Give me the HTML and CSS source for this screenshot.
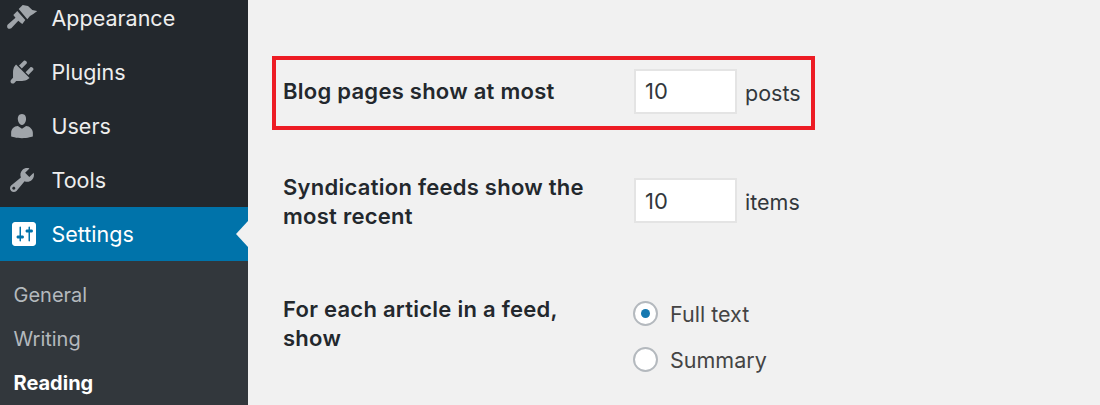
FILE: index.html
```html
<!DOCTYPE html>
<html lang="en">
<head>
<meta charset="utf-8">
<title>Reading Settings</title>
<link rel="stylesheet" href="styles.css">
</head>
<body>
<div class="page">
  <aside class="sidebar">
    <ul class="menu">
      <li class="item"><svg class="icon" viewBox="0 0 30 30"><path d="M11.700 6l4-4 5.300 1 4.300 4 5 1-4 3-3.300 2-2.700 3.300zM10.300 8l8 9-3 4-1.700-1.300-2.300-2-7 7.600c-1 .8-3 .5-3.800-.4-.6-.9-.5-2.800.3-3.500l7.700-6.600L6.300 12z"/></svg>Appearance</li>
      <li class="item"><svg class="icon" viewBox="0 0 20 20"><path d="M13.110 4.360L9.870 7.600 8 5.730l3.240-3.240c.35-.34 1.050-.2 1.560.32.52.51.66 1.210.31 1.550zm-8 1.770l.91-1.120 9.010 9.010-1.190.84c-.71.71-2.630 1.160-3.820 1.160H6.140L4.900 17.260c-.59.59-1.540.59-2.120 0-.59-.58-.59-1.530 0-2.120l1.240-1.240v-3.880c0-1.130.4-3.190 1.090-3.890zm7.260 3.970l3.240-3.240c.34-.35 1.040-.21 1.550.31.52.51.66 1.210.31 1.550l-3.240 3.250z"/></svg>Plugins</li>
      <li class="item"><svg class="icon" viewBox="0 0 20 20"><path d="M10 9.250c-2.270 0-2.730-3.440-2.730-3.440C7 4.020 7.820 2 9.970 2c2.160 0 2.980 2.020 2.710 3.810 0 0-.41 3.440-2.680 3.440zm0 2.570L12.720 10c2.390 0 4.520 2.330 4.520 4.530v2.490s-3.650 1.130-7.240 1.130c-3.650 0-7.240-1.130-7.240-1.130v-2.490c0-2.250 1.940-4.480 4.470-4.480z"/></svg>Users</li>
      <li class="item"><svg class="icon" viewBox="0 0 20 20"><path d="M16.680 9.770c-1.340 1.340-3.300 1.670-4.950.99l-5.410 6.520c-.99.99-2.590.99-3.580 0s-.99-2.590 0-3.570l6.520-5.420c-.68-1.650-.35-3.610.99-4.950 1.280-1.280 3.120-1.620 4.720-1.060l-2.890 2.890 2.820 2.820 2.860-2.870c.53 1.580.18 3.390-1.080 4.650zM3.810 16.210c.4.39 1.040.39 1.430 0 .4-.4.4-1.040 0-1.430-.39-.4-1.030-.4-1.430 0-.39.39-.39 1.030 0 1.430z"/></svg>Tools</li>
      <li class="item current"><svg class="icon" viewBox="2 2 16 16"><path fill-rule="evenodd" d="M18 16V4c0-1.100-.9-2-2-2H4c-1.100 0-2 .9-2 2v12c0 1.100.9 2 2 2h12c1.100 0 2-.9 2-2zM8 11h1c.55 0 1 .45 1 1s-.45 1-1 1H8v1.500c0 .28-.22.5-.5.5s-.5-.22-.5-.5V13H6c-.55 0-1-.45-1-1s.45-1 1-1h1V5.500c0-.28.22-.5.5-.5s.5.22.5.5V11zm5-2h-1c-.55 0-1-.45-1-1s.45-1 1-1h1V5.500c0-.28.22-.5.5-.5s.5.22.5.5V7h1c.55 0 1 .45 1 1s-.45 1-1 1h-1v5.500c0 .28-.22.5-.5.5s-.5-.22-.5-.5V9z"/></svg>Settings</li>
    </ul>
    <ul class="submenu">
      <li class="subitem">General</li>
      <li class="subitem">Writing</li>
      <li class="subitem active">Reading</li>
    </ul>
  </aside>
  <main class="content">
    <div class="row highlight">
      <div class="label">Blog pages show at most</div>
      <div class="field"><span class="input">10</span><span class="unit">posts</span></div>
    </div>
    <div class="row second">
      <div class="label">Syndication feeds show the most recent</div>
      <div class="field"><span class="input">10</span><span class="unit">items</span></div>
    </div>
    <div class="row third">
      <div class="label">For each article in a feed, show</div>
      <div class="choices">
        <div class="choice"><span class="radio checked"></span>Full text</div>
        <div class="choice"><span class="radio"></span>Summary</div>
      </div>
    </div>
  </main>
</div>
</body>
</html>
```
FILE: styles.css
```css
* { box-sizing: border-box; }
html, body { margin: 0; height: 100%; overflow: hidden; }
body { background: #f1f1f1; font-family: Inter, "Liberation Sans", sans-serif; color: #32373c; }
ul { list-style: none; margin: 0; padding: 0; }
.page { display: flex; height: 405px; }
.sidebar { width: 248px; flex: none; background: #32373c; }
.menu { margin-top: -9px; background: #23282d; }
.item { display: flex; align-items: center; height: 54px; padding-left: 7px; gap: 14.500px; font-size: 21.5px; color: #eee; }
.icon { width: 30px; height: 30px; fill: #a0a5aa; flex: none; }
.current { position: relative; background: #0073aa; color: #fff; padding-left: 12px; gap: 15.500px; }
.current .icon { width: 24px; height: 24px; fill: #fff; }
.current::after { content: ""; position: absolute; right: 0; top: 50%; margin-top: -13px; border: 13px solid transparent; border-left-width: 0; border-right-width: 12px; border-right-color: #f1f1f1; }
.submenu { padding-top: 12px; }
.subitem { height: 44px; padding-left: 13.500px; display: flex; align-items: center; font-size: 20px; color: #b4b9be; }
.active { color: #fff; font-weight: 700; }
.content { flex: 1; display: flex; flex-direction: column; align-items: flex-start; padding: 56px 0 0 24px; }
.row { display: flex; width: 543px; padding-left: 11px; }
.label { width: 351px; flex: none; font-size: 22px; letter-spacing: .26px; line-height: 29px; font-weight: 600; color: #23282d; padding-right: 40px; }
.highlight { height: 74px; border: 4px solid #ed1c24; padding-left: 7px; align-items: center; }
.highlight .label { margin-bottom: 4px; }
.highlight .field { margin-bottom: 4px; }
.highlight .unit { padding-top: 4px; }
.field { display: flex; align-items: center; gap: 8px; }
.input { display: flex; align-items: center; width: 103px; height: 45px; padding-left: 9px; background: #fff; border: 2px solid #e4e4e4; font-size: 22px; color: #32373c; }
.unit { font-size: 21.5px; }
.second { margin-top: 48px; }
.second .field { align-self: flex-start; }
.second .unit { padding-top: 2px; }
.second .label { margin-top: -5px; }
.third { margin-top: 64px; }
.choices { display: flex; flex-direction: column; gap: 21px; margin-left: -1.500px; padding-top: 6px; }
.choice { display: flex; align-items: center; gap: 12.500px; font-size: 21.5px; height: 25px; color: #444; }
.radio { width: 25px; height: 25px; border-radius: 50%; background: #fff; border: 2px solid #b4b9be; display: flex; align-items: center; justify-content: center; }
.checked::before { content: ""; width: 9px; height: 9px; border-radius: 50%; background: #1578b0; }
```
